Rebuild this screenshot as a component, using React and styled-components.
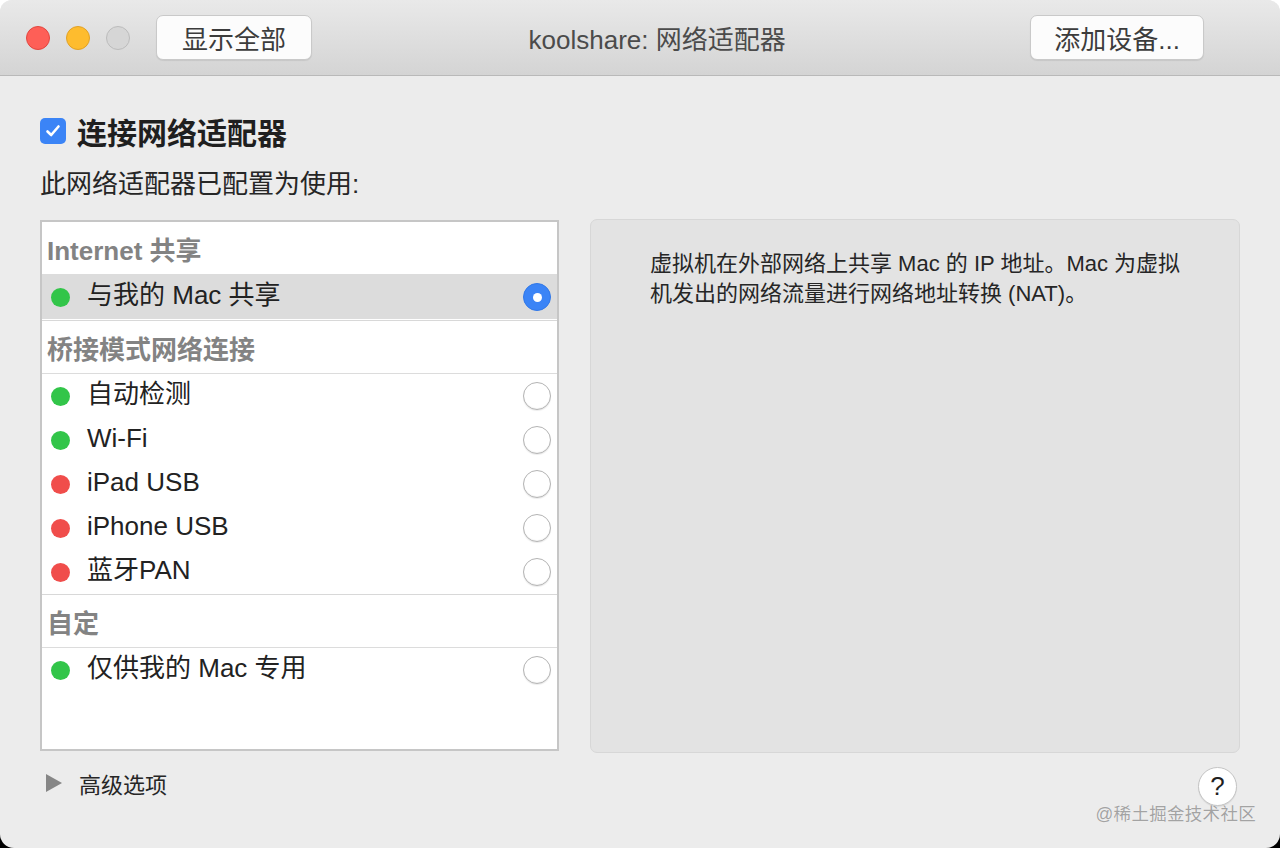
import React from 'react'
import styled, { createGlobalStyle } from 'styled-components'

const GlobalStyle = createGlobalStyle`
  html, body {
    margin: 0;
    padding: 0;
    background: linear-gradient(#ffffff 50%, #000000 50%);
  }
  * {
    box-sizing: border-box;
  }
`

const FONT = `"Liberation Sans", "Noto Sans CJK SC", sans-serif`

const Window = styled.div`
  width: 1280px;
  height: 848px;
  display: flex;
  flex-direction: column;
  background: #ececec;
  border-radius: 12px 12px 14px 14px;
  overflow: hidden;
  position: relative;
  font-family: ${FONT};
  color: #262626;
`

const TitleBar = styled.div`
  height: 76px;
  flex: none;
  display: flex;
  align-items: center;
  padding: 0 76px 0 26px;
  background: linear-gradient(#e9e9e9, #d4d4d4);
  border-bottom: 1px solid #b9b9b9;
`

const Lights = styled.div`
  display: flex;
  gap: 16px;
  margin-right: 26px;
`

const Light = styled.div`
  width: 24px;
  height: 24px;
  border-radius: 50%;
  background: ${p => p.$bg};
  border: 1px solid ${p => p.$border};
`

const ToolButton = styled.button`
  height: 45px;
  padding: 0 ${p => p.$pad}px;
  background: #fcfcfc;
  border: 1px solid #c9c9c9;
  border-radius: 7px;
  box-shadow: 0 1px 1px rgba(0, 0, 0, 0.08);
  font-family: ${FONT};
  font-size: 26px;
  color: #3c3c3c;
  display: flex;
  align-items: center;
  white-space: nowrap;
`

const WindowTitle = styled.div`
  flex: 1;
  text-align: center;
  padding-right: 28px;
  font-size: 26px;
  color: #4b4b4b;
`

const Content = styled.div`
  flex: 1;
  display: flex;
  flex-direction: column;
  padding: 40px 40px 0 40px;
`

const EnableRow = styled.label`
  display: flex;
  align-items: center;
  gap: 11px;
  height: 30px;
`

const CheckBox = styled.div`
  width: 26px;
  height: 26px;
  border-radius: 5px;
  background: #3b84f6;
  display: flex;
  align-items: center;
  justify-content: center;
`

const EnableLabel = styled.span`
  font-size: 30px;
  font-weight: 700;
  color: #1f1f1f;
`

const Subtitle = styled.div`
  margin-top: 23px;
  font-size: 26px;
  line-height: 30px;
  color: #262626;
`

const Main = styled.div`
  margin-top: 21px;
  display: flex;
  gap: 31px;
  align-items: flex-start;
`

const List = styled.div`
  width: 519px;
  height: 531px;
  flex: none;
  background: #ffffff;
  border: 2px solid #c6c6c6;
  display: flex;
  flex-direction: column;
`

const Group = styled.div`
  border-top: ${p => (p.$first ? 'none' : '1px solid #d8d8d8')};
  padding-bottom: ${p => (p.$first ? 1 : 0)}px;
`

const GroupHeader = styled.div`
  height: 53px;
  display: flex;
  align-items: center;
  padding-left: 5px;
  border-bottom: 1px solid #dcdcdc;
  font-size: 26px;
  font-weight: 700;
  color: #838383;
`

const Row = styled.div`
  height: 44px;
  display: flex;
  align-items: center;
  padding: 0 6px 0 9px;
  background: ${p => (p.$selected ? '#dcdcdc' : 'transparent')};
`

const StatusDot = styled.div`
  width: 19px;
  height: 19px;
  border-radius: 50%;
  background: ${p => (p.$on ? '#32c549' : '#f04d4b')};
  margin-right: 17px;
`

const RowLabel = styled.span`
  flex: 1;
  font-size: 26px;
  line-height: 32px;
  padding-bottom: 4px;
  color: #222222;
`

const Radio = styled.div`
  width: 28px;
  height: 28px;
  border-radius: 50%;
  display: flex;
  align-items: center;
  justify-content: center;
  background: ${p => (p.$checked ? '#3b84f6' : '#ffffff')};
  border: 1px solid ${p => (p.$checked ? '#3178e8' : '#b4b4b4')};
  box-shadow: ${p => (p.$checked ? 'none' : 'inset 0 -1px 1px rgba(0,0,0,0.05), 0 1px 1px rgba(0,0,0,0.08)')};

  &::after {
    content: '';
    display: ${p => (p.$checked ? 'block' : 'none')};
    width: 9px;
    height: 9px;
    border-radius: 50%;
    background: #ffffff;
  }
`

const InfoPanel = styled.div`
  flex: 1;
  height: 534px;
  margin-top: -1px;
  background: #e3e3e3;
  border: 1px solid #d7d7d7;
  border-radius: 7px;
  padding: 29px 0 0 59px;
`

const InfoText = styled.p`
  margin: 0;
  width: 552px;
  font-size: 22px;
  line-height: 30px;
  color: #262626;
`

const Footer = styled.div`
  height: 60px;
  display: flex;
  align-items: center;
  padding: 0 0 0 6px;
`

const Disclosure = styled.div`
  width: 0;
  height: 0;
  border-top: 9px solid transparent;
  border-bottom: 9px solid transparent;
  border-left: 16px solid #868686;
  margin-right: 17px;
`

const FooterLabel = styled.span`
  flex: 1;
  font-size: 22px;
  color: #262626;
`

const HelpButton = styled.button`
  width: 39px;
  height: 39px;
  margin-right: 3px;
  margin-top: 6px;
  border-radius: 50%;
  background: #ffffff;
  border: 1px solid #c4c4c4;
  box-shadow: 0 1px 1px rgba(0, 0, 0, 0.08);
  font-family: ${FONT};
  font-size: 26px;
  color: #1f1f1f;
  display: flex;
  align-items: center;
  justify-content: center;
  padding: 0;
`

const Watermark = styled.div`
  position: absolute;
  right: 24px;
  bottom: 23px;
  font-size: 17.5px;
  color: #a3a3a3;
  letter-spacing: 0.3px;
  text-shadow: 0 0 1px #ffffff;
`

const groups = [
  {
    title: 'Internet 共享',
    rows: [{ name: '与我的 Mac 共享', on: true, selected: true }],
  },
  {
    title: '桥接模式网络连接',
    rows: [
      { name: '自动检测', on: true },
      { name: 'Wi-Fi', on: true },
      { name: 'iPad USB', on: false },
      { name: 'iPhone USB', on: false },
      { name: '蓝牙PAN', on: false },
    ],
  },
  {
    title: '自定',
    rows: [{ name: '仅供我的 Mac 专用', on: true }],
  },
]

const App = () => (
  <>
    <GlobalStyle />
    <Window>
      <TitleBar>
        <Lights>
          <Light $bg='#fe5f57' $border='#e2463f' />
          <Light $bg='#febc2e' $border='#e1a126' />
          <Light $bg='#d6d6d6' $border='#bcbcbc' />
        </Lights>
        <ToolButton $pad={25}>显示全部</ToolButton>
        <WindowTitle>koolshare: 网络适配器</WindowTitle>
        <ToolButton $pad={23}>添加设备...</ToolButton>
      </TitleBar>

      <Content>
        <EnableRow>
          <CheckBox>
            <svg width='18' height='18' viewBox='0 0 18 18'>
              <path d='M3.5 9.5 L7.2 13 L14.5 4.5' fill='none' stroke='#ffffff' strokeWidth='2.6' strokeLinecap='round' strokeLinejoin='round' />
            </svg>
          </CheckBox>
          <EnableLabel>连接网络适配器</EnableLabel>
        </EnableRow>
        <Subtitle>此网络适配器已配置为使用:</Subtitle>

        <Main>
          <List>
            {groups.map((g, i) => (
              <Group key={g.title} $first={i === 0}>
                <GroupHeader>{g.title}</GroupHeader>
                {g.rows.map(r => (
                  <Row key={r.name} $selected={r.selected}>
                    <StatusDot $on={r.on} />
                    <RowLabel>{r.name}</RowLabel>
                    <Radio $checked={r.selected} />
                  </Row>
                ))}
              </Group>
            ))}
          </List>
          <InfoPanel>
            <InfoText>
              虚拟机在外部网络上共享 Mac 的 IP 地址。Mac 为虚拟机发出的网络流量进行网络地址转换 (NAT)。
            </InfoText>
          </InfoPanel>
        </Main>

        <Footer>
          <Disclosure />
          <FooterLabel>高级选项</FooterLabel>
          <HelpButton>?</HelpButton>
        </Footer>
      </Content>

      <Watermark>@稀土掘金技术社区</Watermark>
    </Window>
  </>
)

export default App
